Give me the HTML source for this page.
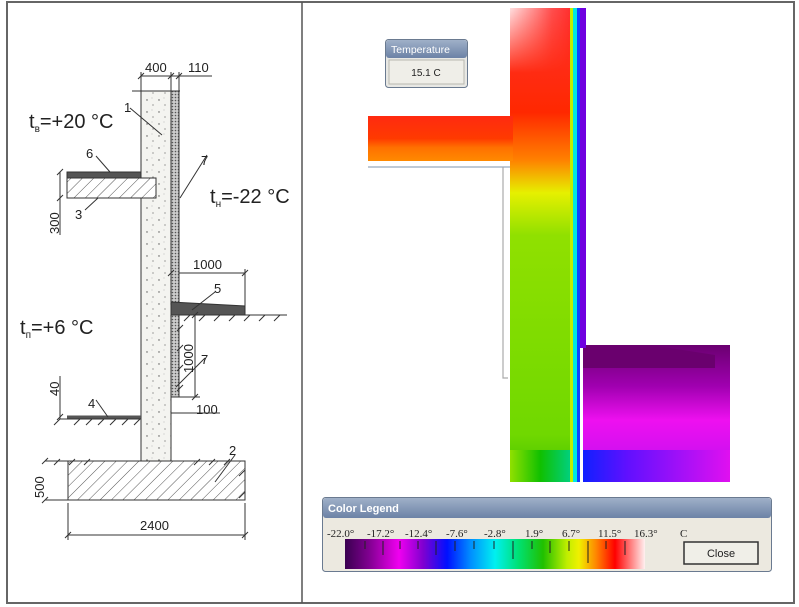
<!DOCTYPE html>
<html><head><meta charset="utf-8"><style>
html,body{margin:0;padding:0;background:#fff;width:799px;height:607px;overflow:hidden}
svg{display:block}
</style></head><body>
<svg width="799" height="607" viewBox="0 0 799 607" xmlns="http://www.w3.org/2000/svg" font-family="Liberation Sans, sans-serif">
<defs>
<pattern id="hatch" width="8" height="8" patternUnits="userSpaceOnUse" patternTransform="rotate(45)">
<rect width="8" height="8" fill="#fff"/><line x1="0" y1="0" x2="0" y2="8" stroke="#555" stroke-width="1"/></pattern>
<pattern id="conc" width="12" height="12" patternUnits="userSpaceOnUse">
<rect width="12" height="12" fill="#f4f4f0"/><circle cx="3" cy="4" r="0.7" fill="#555"/><circle cx="9" cy="9" r="0.6" fill="#666"/><circle cx="8" cy="2" r="0.4" fill="#777"/></pattern>
<pattern id="ins" width="3" height="3" patternUnits="userSpaceOnUse">
<rect width="3" height="3" fill="#ccc"/><circle cx="1.5" cy="1.5" r="0.8" fill="#555"/></pattern>
<linearGradient id="wallV" x1="0" x2="0" y1="0" y2="1">
<stop offset="0" stop-color="#ff3030"/><stop offset="0.22" stop-color="#ff2800"/><stop offset="0.32" stop-color="#ff8000"/><stop offset="0.39" stop-color="#e6f000"/><stop offset="0.48" stop-color="#90e000"/><stop offset="0.9" stop-color="#70d800"/><stop offset="1" stop-color="#40c000"/></linearGradient>
<linearGradient id="pinkH" x1="0" x2="1" y1="0" y2="0"><stop offset="0" stop-color="#fff" stop-opacity="0.85"/><stop offset="0.7" stop-color="#fff" stop-opacity="0.15"/><stop offset="1" stop-color="#fff" stop-opacity="0"/></linearGradient>
<linearGradient id="fadeV" x1="0" x2="0" y1="0" y2="1"><stop offset="0" stop-color="#fff"/><stop offset="1" stop-color="#000"/></linearGradient>
<mask id="m1"><rect x="510" y="8" width="60" height="65" fill="url(#fadeV)"/></mask>
<linearGradient id="slab" x1="0" x2="0" y1="0" y2="1"><stop offset="0" stop-color="#ff2a10"/><stop offset="0.5" stop-color="#ff3a00"/><stop offset="0.7" stop-color="#ff7000"/><stop offset="1" stop-color="#ff8a00"/></linearGradient>
<linearGradient id="soil" x1="0" x2="0" y1="0" y2="1"><stop offset="0" stop-color="#6a0070"/><stop offset="0.3" stop-color="#a000b0"/><stop offset="0.55" stop-color="#ee10f0"/><stop offset="0.8" stop-color="#d010f0"/><stop offset="1" stop-color="#b020f0"/></linearGradient>
<linearGradient id="soilB" x1="0" x2="1" y1="0" y2="0"><stop offset="0" stop-color="#1020ff"/><stop offset="0.3" stop-color="#6010ff"/><stop offset="1" stop-color="#e010f0"/></linearGradient>
<linearGradient id="wallBot" x1="0" x2="1" y1="0" y2="0"><stop offset="0" stop-color="#90e000"/><stop offset="0.5" stop-color="#10c000"/><stop offset="1" stop-color="#00d080"/></linearGradient>
<linearGradient id="spec" x1="0" x2="1" y1="0" y2="0">
<stop offset="0" stop-color="#3a0050"/><stop offset="0.08" stop-color="#800090"/><stop offset="0.18" stop-color="#f000f0"/><stop offset="0.26" stop-color="#8000d0"/><stop offset="0.34" stop-color="#0010ff"/><stop offset="0.42" stop-color="#0090ff"/><stop offset="0.5" stop-color="#00f0f0"/><stop offset="0.58" stop-color="#00e070"/><stop offset="0.66" stop-color="#20c000"/><stop offset="0.74" stop-color="#c0ee00"/><stop offset="0.78" stop-color="#f0f000"/><stop offset="0.84" stop-color="#ff8000"/><stop offset="0.9" stop-color="#ff0000"/><stop offset="1" stop-color="#fff0f0"/></linearGradient>
<linearGradient id="title" x1="0" x2="0" y1="0" y2="1"><stop offset="0" stop-color="#9fb0c8"/><stop offset="1" stop-color="#6c82a6"/></linearGradient>
</defs>

<rect x="7" y="2" width="787" height="601" fill="none" stroke="#666" stroke-width="2"/>
<line x1="302" y1="2" x2="302" y2="603" stroke="#555" stroke-width="1.5"/>

<!-- LEFT DRAWING -->
<g stroke="#333" stroke-width="1" fill="none">
<rect x="141" y="91" width="30" height="370" fill="url(#conc)"/>
<rect x="171" y="91" width="8" height="306" fill="url(#ins)"/>
<rect x="67" y="172" width="74" height="6" fill="#555"/>
<rect x="67" y="178" width="89" height="20" fill="url(#hatch)"/>
<rect x="68" y="461" width="177" height="39" fill="url(#hatch)"/>
<polygon points="171,302 245,306 245,315 171,315" fill="#555"/>
<line x1="67" y1="417" x2="141" y2="417" stroke-width="3" stroke="#555"/>
<line x1="60" y1="419" x2="141" y2="419"/>
<line x1="179" y1="315" x2="287" y2="315"/>
<line x1="171" y1="413" x2="220" y2="413"/>
<line x1="132" y1="91" x2="180" y2="91"/>
<path d="M80,419 l-6,6 M92,419 l-6,6 M104,419 l-6,6 M116,419 l-6,6 M128,419 l-6,6 M140,419 l-6,6 M60,419 l-6,6 M190,315 l-6,6 M205,315 l-6,6 M220,315 l-6,6 M235,315 l-6,6 M250,315 l-6,6 M265,315 l-6,6 M280,315 l-6,6 M183,325 l-6,6 M183,345 l-6,6 M183,365 l-6,6 M183,385 l-6,6 M60,459 l-6,6 M75,459 l-6,6 M90,459 l-6,6 M200,459 l-6,6 M215,459 l-6,6 M230,459 l-6,6 M245,470 l-6,6 M245,492 l-6,6"/>
<line x1="141" y1="76" x2="212" y2="76"/>
<path d="M138,79 l6,-6 M168,79 l6,-6 M176,79 l6,-6"/>
<line x1="141" y1="72" x2="141" y2="91"/><line x1="171" y1="72" x2="171" y2="91"/><line x1="179" y1="72" x2="179" y2="91"/>
<line x1="179" y1="273" x2="245" y2="273"/><line x1="245" y1="269" x2="245" y2="315"/>
<path d="M168,276 l6,-6 M242,276 l6,-6"/>
<line x1="195" y1="315" x2="195" y2="397"/><line x1="179" y1="397" x2="200" y2="397"/>
<path d="M192,318 l6,-6 M192,400 l6,-6"/>
<line x1="60" y1="172" x2="60" y2="235"/><path d="M57,175 l6,-6 M57,201 l6,-6"/>
<line x1="60" y1="376" x2="60" y2="419"/><path d="M57,420 l6,-6"/>
<line x1="45" y1="461" x2="68" y2="461"/><line x1="45" y1="500" x2="68" y2="500"/><path d="M42,464 l6,-6 M42,503 l6,-6"/>
<line x1="68" y1="503" x2="68" y2="540"/><line x1="245" y1="503" x2="245" y2="540"/>
<line x1="68" y1="535" x2="245" y2="535"/><path d="M65,538 l6,-6 M242,538 l6,-6"/>
<path d="M130,108 L162,135 M96,156 L110,172 M98,198 L85,210 M180,198 L207,155 M192,310 L215,292 M176,387 L205,358 M108,417 L96,400 M215,482 L235,455"/>
</g>
<g fill="#222" font-size="13">
<text x="145" y="72">400</text><text x="188" y="72">110</text>
<text x="124" y="112">1</text><text x="229" y="455">2</text><text x="75" y="219">3</text>
<text x="88" y="408">4</text><text x="214" y="293">5</text><text x="86" y="158">6</text>
<text x="201" y="165">7</text><text x="201" y="364">7</text>
<text x="193" y="269">1000</text><text x="196" y="414">100</text><text x="140" y="530">2400</text>
<text transform="translate(59,234) rotate(-90)">300</text>
<text transform="translate(59,396) rotate(-90)">40</text>
<text transform="translate(44,498) rotate(-90)">500</text>
<text transform="translate(193,373) rotate(-90)">1000</text>
</g>
<g fill="#222" font-size="20">
<text x="29" y="128">t<tspan font-size="10" dy="4">в</tspan><tspan dy="-4">=+20 °C</tspan></text>
<text x="210" y="203">t<tspan font-size="10" dy="4">н</tspan><tspan dy="-4">=-22 °C</tspan></text>
<text x="20" y="334">t<tspan font-size="10" dy="4">п</tspan><tspan dy="-4">=+6 °C</tspan></text>
</g>

<!-- RIGHT THERMAL -->
<line x1="368" y1="167" x2="510" y2="167" stroke="#aab8c8" stroke-width="1.5"/>
<polyline points="503,167 503,378 508,378" fill="none" stroke="#aaa" stroke-width="1.2"/>
<rect x="510" y="8" width="61" height="474" fill="url(#wallV)"/>
<rect x="510" y="8" width="60" height="65" fill="url(#pinkH)" mask="url(#m1)"/>
<rect x="368" y="116" width="145" height="45" fill="url(#slab)"/>
<rect x="510" y="450" width="61" height="32" fill="url(#wallBot)"/>
<rect x="583" y="345" width="147" height="137" fill="url(#soil)"/>
<polygon points="583,345 650,345 715,355 715,368 583,368" fill="#6a006e"/>
<rect x="583" y="450" width="147" height="32" fill="url(#soilB)"/>
<rect x="570" y="8" width="3" height="474" fill="#c0f000"/>
<rect x="573" y="8" width="4" height="474" fill="#00e8e0"/>
<rect x="577" y="8" width="3" height="474" fill="#1040ff"/>
<rect x="580" y="8" width="6" height="340" fill="#7000e0"/>

<rect x="385.5" y="39.5" width="82" height="48" rx="3" fill="#e8e8e4" stroke="#6a7a90"/>
<rect x="386" y="40" width="81" height="18" rx="3" fill="url(#title)"/>
<rect x="389" y="60" width="75" height="24" fill="#efeee8" stroke="#b8b8b0"/>
<text x="391" y="53" fill="#fff" font-size="10.5">Temperature</text>
<text x="426" y="76" fill="#222" font-size="10" text-anchor="middle">15.1 C</text>

<rect x="322.5" y="497.5" width="449" height="74" rx="3" fill="#ece9e0" stroke="#6a7a90"/>
<rect x="323" y="498" width="448" height="20" rx="3" fill="url(#title)"/>
<text x="328" y="512" fill="#fff" font-size="11" font-weight="bold">Color Legend</text>
<rect x="345" y="539" width="300" height="30" fill="url(#spec)"/>
<g stroke="#222" stroke-width="1">
<path d="M365,541v8 M383,541v14 M400,541v8 M418,541v8 M436,541v14 M455,541v10 M474,541v8 M494,541v8 M513,541v18 M532,541v8 M550,541v12 M569,541v10 M588,541v22 M606,541v8 M625,541v14"/>
</g>
<g font-family="Liberation Serif, serif" font-size="11" fill="#222">
<text x="327" y="537">-22.0°</text><text x="367" y="537">-17.2°</text><text x="405" y="537">-12.4°</text>
<text x="446" y="537">-7.6°</text><text x="484" y="537">-2.8°</text><text x="525" y="537">1.9°</text>
<text x="562" y="537">6.7°</text><text x="598" y="537">11.5°</text><text x="634" y="537">16.3°</text>
<text x="680" y="537">C</text>
</g>
<rect x="684" y="542" width="74" height="22" fill="#f0efe8" stroke="#333" stroke-width="1.5"/>
<text x="721" y="557" text-anchor="middle" font-size="11" fill="#222">Close</text>
</svg>
</body></html>
